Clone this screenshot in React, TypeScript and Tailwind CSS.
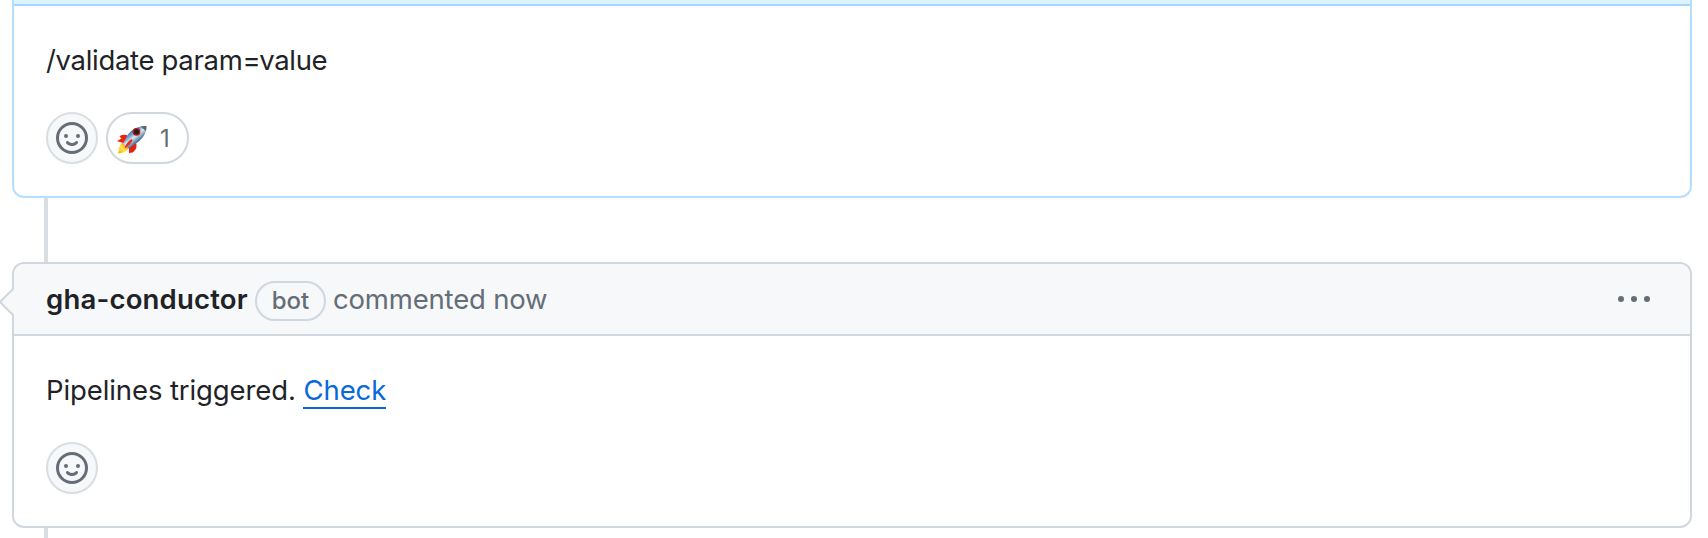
import React from "react";

const FONT = "font-['Inter','Liberation_Sans',sans-serif]";

function SmileyButton() {
  return (
    <button
      type="button"
      aria-label="Add reaction"
      className="flex size-[52px] items-center justify-center rounded-full border-2 border-[#d8dee4] bg-[#f6f8fa] text-[#656d76]"
    >
      <svg viewBox="0 0 16 16" className="size-8" fill="currentColor">
        <path d="M8 0a8 8 0 1 1 0 16A8 8 0 0 1 8 0ZM1.5 8a6.5 6.5 0 1 0 13 0 6.5 6.5 0 0 0-13 0Zm3.82 1.636a.75.75 0 0 1 1.038.175l.007.009c.103.118.22.222.35.31.264.178.683.37 1.285.37.602 0 1.02-.192 1.285-.371.13-.088.247-.192.35-.31l.007-.008a.75.75 0 0 1 1.222.87l-.022-.015c.02.013.021.015.021.015v.001l-.001.002-.002.003-.005.007-.014.019a2.066 2.066 0 0 1-.184.213c-.16.166-.338.316-.53.445-.63.418-1.37.638-2.127.629-.946 0-1.652-.308-2.126-.63a3.331 3.331 0 0 1-.715-.657l-.014-.02-.005-.006-.002-.003v-.002h-.001l.613-.432-.614.43a.75.75 0 0 1 .183-1.044ZM12 7a1 1 0 1 1-2 0 1 1 0 0 1 2 0ZM5 8a1 1 0 1 1 0-2 1 1 0 0 1 0 2Zm5.25 2.25.592.416a97.71 97.71 0 0 0-.592-.416Z" />
      </svg>
    </button>
  );
}

function Rocket() {
  return (
    <svg viewBox="0 0 30 30" className="mt-[3px] h-[30px] w-[30px]">
      <defs>
        <linearGradient id="hull" x1="11" y1="7" x2="20" y2="18" gradientUnits="userSpaceOnUse">
          <stop offset="0" stopColor="#35709f" />
          <stop offset="0.3" stopColor="#6fa3cc" />
          <stop offset="0.55" stopColor="#dde8ee" />
          <stop offset="0.72" stopColor="#9fb4c2" />
          <stop offset="1" stopColor="#2f6799" />
        </linearGradient>
        <linearGradient id="flame" x1="2" y1="28" x2="10" y2="20" gradientUnits="userSpaceOnUse">
          <stop offset="0" stopColor="#ffb000" />
          <stop offset="0.5" stopColor="#ffe94a" />
          <stop offset="1" stopColor="#ff8a1c" />
        </linearGradient>
      </defs>
      <path d="M11 10.500C6 9 4 10.500 2.500 11.500L4.500 13.500L0 16L7.500 18.500Z" fill="#f0200f" />
      <path d="M19 18C20.500 22 18.500 25.500 15.500 27.500L12 28L12 22Z" fill="#e9200f" />
      <path d="M6 17.500C3 18.500 3.500 21 1.500 23.500L2.200 24L1 28.500C6 28 9 27 12 23Z" fill="url(#flame)" />
      <path d="M29.500 1C22 .5 14 4 10 11L6 18.500L11.500 23.500L19 18.500C26 14 29.500 8 29.500 1Z" fill="url(#hull)" />
      <path d="M29.500 1C27 .7 25 1 23.500 1.500L28.900 6C29.400 4 29.600 3 29.500 1Z" fill="#5a6771" />
      <circle cx="19.500" cy="6.800" r="3.900" fill="#b01c22" />
      <circle cx="19.500" cy="6.800" r="2.500" fill="#28191c" />
      <path d="M14.500 14C11 16 8.500 20 7.500 23.500C11 21.500 14.500 18 15.500 15Z" fill="#ed2a1e" />
    </svg>
  );
}

export default function App() {
  return (
    <div className={`h-[538px] w-[1708px] overflow-hidden bg-white pl-3 text-[27.5px] leading-[42px] text-[#1f2328] ${FONT}`}>
      <section className="h-[198px] w-[1680px] overflow-hidden rounded-b-xl border-2 border-t-0 border-[#b6dfff]">
        <div className="h-1.5 border-b-2 border-[#a5d6ff] bg-[#ddf4ff]" />
        <p className="mt-[33px] ml-8 tracking-[-0.32px]">/validate param=value</p>
        <div className="mt-[31px] ml-8 flex gap-2">
          <SmileyButton />
          <button type="button" className="flex h-[52px] w-[83px] items-center rounded-full border-2 border-[#d0d7de] pl-[9px] text-[#656d76]">
            <Rocket />
            <span className="mt-0.5 ml-[13px] text-[24px]">1</span>
          </button>
        </div>
      </section>

      <div className="ml-8 h-16 w-1 bg-[#d8dee4]" />

      <section className="relative h-[266px] w-[1680px] rounded-xl border-2 border-[#d0d7de]">
        <header className="flex h-[72px] items-center rounded-t-[10px] border-b-2 border-[#d0d7de] bg-[#f6f8fa] pl-8 text-[#656d76]">
          <strong className="w-[209px] font-semibold tracking-[0.2px] text-[#1f2328]">gha-conductor</strong>
          <span className="mt-1 flex h-10 w-[71px] items-center justify-center rounded-full border-2 border-[#d0d7de] text-[24px] font-medium">bot</span>
          <span className="ml-[7px] tracking-[-0.18px]">commented now</span>
          <svg viewBox="0 0 16 16" className="mt-0.5 mr-10 ml-auto size-8" fill="currentColor">
            <path d="M8 9a1.500 1.500 0 1 0 0-3 1.500 1.500 0 0 0 0 3ZM1.500 9a1.500 1.500 0 1 0 0-3 1.500 1.500 0 0 0 0 3Zm13 0a1.500 1.500 0 1 0 0-3 1.500 1.500 0 0 0 0 3Z" />
          </svg>
        </header>
        <svg viewBox="0 0 14 30" className="absolute top-[23px] -left-[14px] h-[30px] w-[14px]">
          <path d="M14 2L1 15L14 28Z" fill="#f6f8fa" />
          <path d="M13 2L0 15L13 28" fill="none" stroke="#d0d7de" strokeWidth="2" />
        </svg>
        <p className="mt-[33px] ml-8 tracking-[-0.1px]">
          Pipelines triggered.{" "}
          <a href="#" className="border-b-2 border-[#0969da] text-[#0969da]">Check</a>
        </p>
        <div className="mt-[31px] ml-8">
          <SmileyButton />
        </div>
      </section>
      <div className="ml-8 h-2.5 w-1 bg-[#d8dee4]" />
    </div>
  );
}
